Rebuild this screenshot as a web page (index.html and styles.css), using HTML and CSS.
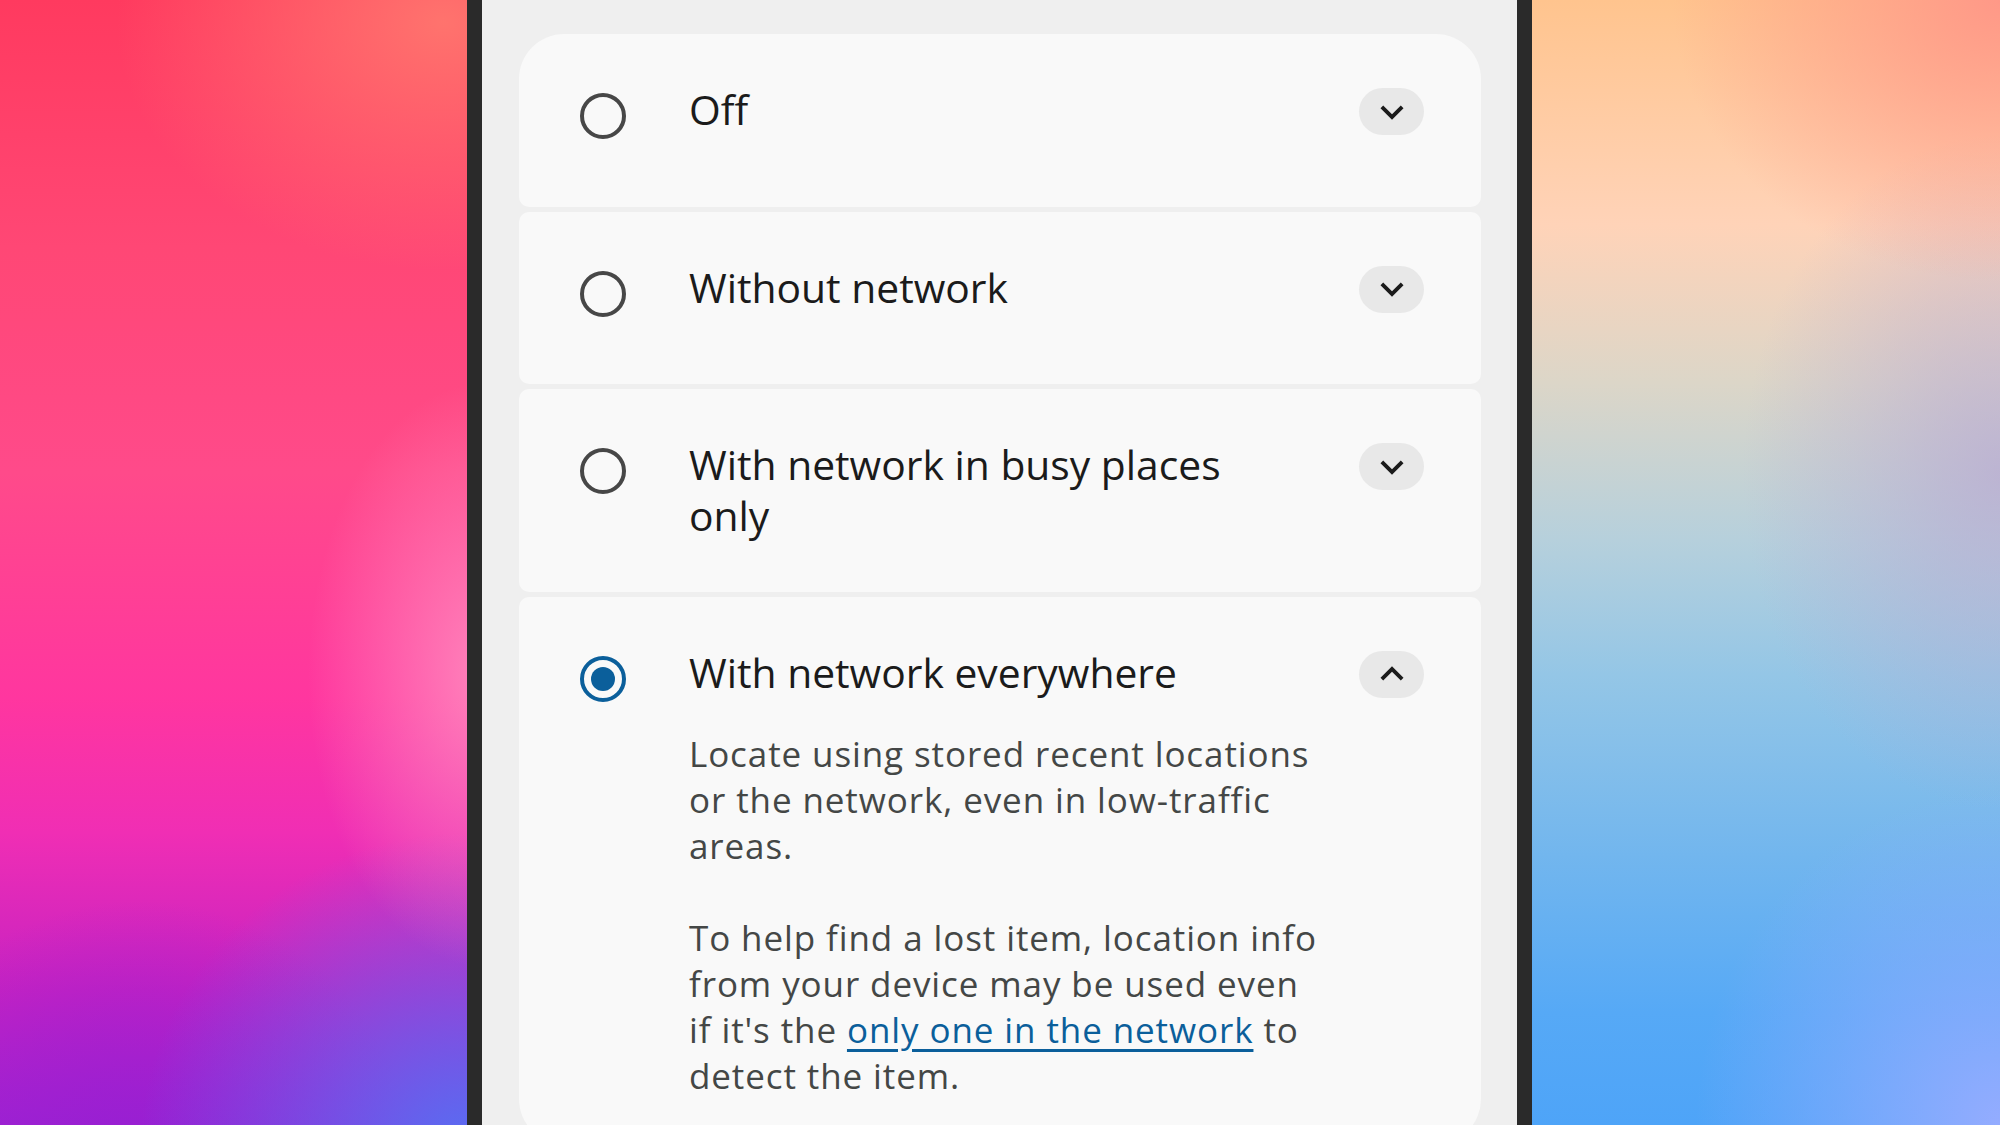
FILE: index.html
```html
<!DOCTYPE html>
<html lang="en">
<head>
<meta charset="utf-8">
<title>Find My Device network</title>
<link rel="stylesheet" href="styles.css">
</head>
<body>
<div class="stage">
  <div class="wall wall-left"></div>
  <div class="phone">
    <div class="screen">
      <div class="options">
        <div class="option first">
          <span class="radio"></span>
          <div class="body">
            <div class="title">Off</div>
          </div>
          <button class="toggle" aria-label="Expand">
            <svg viewBox="0 0 24 24" width="46" height="46"><path d="M16.59 8.59L12 13.17 7.41 8.59 6 10l6 6 6-6z"/></svg>
          </button>
        </div>
        <div class="option">
          <span class="radio"></span>
          <div class="body">
            <div class="title">Without network</div>
          </div>
          <button class="toggle" aria-label="Expand">
            <svg viewBox="0 0 24 24" width="46" height="46"><path d="M16.59 8.59L12 13.17 7.41 8.59 6 10l6 6 6-6z"/></svg>
          </button>
        </div>
        <div class="option">
          <span class="radio"></span>
          <div class="body">
            <div class="title">With network in busy places only</div>
          </div>
          <button class="toggle" aria-label="Expand">
            <svg viewBox="0 0 24 24" width="46" height="46"><path d="M16.59 8.59L12 13.17 7.41 8.59 6 10l6 6 6-6z"/></svg>
          </button>
        </div>
        <div class="option last">
          <span class="radio checked"></span>
          <div class="body">
            <div class="title">With network everywhere</div>
            <p class="desc">Locate using stored recent locations<br>or the network, even in low-traffic<br>areas.</p>
            <p class="desc">To help find a lost item, location info<br>from your device may be used even<br>if it's the <a href="#" class="link">only one in the network</a> to<br>detect the item.</p>
          </div>
          <button class="toggle" aria-label="Collapse">
            <svg viewBox="0 0 24 24" width="46" height="46"><path d="M12 8l-6 6 1.41 1.41L12 10.83l4.59 4.58L18 14z"/></svg>
          </button>
        </div>
      </div>
    </div>
  </div>
  <div class="wall wall-right"></div>
</div>
</body>
</html>
```
FILE: styles.css
```css
html, body {
  margin: 0;
  padding: 0;
  height: 100%;
  overflow: hidden;
}

.stage {
  display: flex;
  width: 2000px;
  height: 1125px;
  font-family: "Open Sans", "Noto Sans", sans-serif;
}

.wall {
  height: 100%;
}

.wall-left {
  width: 467px;
  background:
    radial-gradient(ellipse 70% 22% at 95% 2%, rgba(255, 118, 110, 0.95), rgba(255, 118, 110, 0) 100%),
    radial-gradient(ellipse 38% 26% at 104% 60%, rgba(255, 150, 195, 0.8), rgba(255, 150, 195, 0) 100%),
    radial-gradient(ellipse 70% 28% at 100% 102%, rgba(88, 110, 242, 1), rgba(88, 110, 242, 0) 100%),
    radial-gradient(ellipse 60% 25% at 30% 105%, rgba(150, 30, 210, 0.9), rgba(150, 30, 210, 0) 100%),
    linear-gradient(180deg, #ff3a5f 0%, #ff4775 22%, #ff4a8a 42%, #ff369f 62%, #f02eb4 74%, #c622c2 88%, #a122d2 100%);
}

.wall-right {
  flex: 1;
  background:
    radial-gradient(ellipse 70% 25% at 100% 0%, rgba(255, 150, 135, 0.95), rgba(255, 150, 135, 0) 100%),
    radial-gradient(ellipse 55% 30% at 100% 42%, rgba(185, 170, 210, 0.75), rgba(185, 170, 210, 0) 100%),
    radial-gradient(ellipse 65% 30% at 100% 100%, rgba(148, 172, 255, 1), rgba(148, 172, 255, 0) 100%),
    linear-gradient(180deg, #ffc48e 0%, #ffd3b8 20%, #dcd6c8 34%, #b6d0dc 48%, #94c6e6 60%, #72b6ee 76%, #56a9f6 90%, #4ea4f8 100%);
}

.phone {
  width: 1035px;
  border-left: 15px solid #2a2a2a;
  border-right: 15px solid #2a2a2a;
  background: #efefef;
  height: 100%;
  overflow: hidden;
}

.screen {
  padding: 34px 36px 0 37px;
}

.options {
  display: flex;
  flex-direction: column;
  gap: 5px;
}

.option {
  display: flex;
  align-items: flex-start;
  box-sizing: border-box;
  min-height: 172.5px;
  padding: 50px 57px 50.5px 61px;
  background: #f9f9f9;
  border-radius: 10px;
}

.option.first {
  border-radius: 45px 45px 10px 10px;
}

.option.last {
  border-radius: 10px 10px 45px 45px;
  padding-bottom: 45px;
}

.radio {
  flex: none;
  box-sizing: border-box;
  width: 46px;
  height: 46px;
  margin-top: 9px;
  border: 4px solid #474747;
  border-radius: 50%;
  display: flex;
  align-items: center;
  justify-content: center;
}

.radio.checked {
  border-color: #0b5f9b;
}

.radio.checked::after {
  content: "";
  width: 24px;
  height: 24px;
  border-radius: 50%;
  background: #0b5f9b;
}

.body {
  flex: 1;
  margin-left: 63px;
}

.title {
  font-size: 40.8px;
  line-height: 51px;
  color: #1b1b1b;
  max-width: 560px;
}

.desc {
  margin: 33px 0 0;
  white-space: nowrap;
  font-size: 35px;
  line-height: 46px;
  letter-spacing: 0.9px;
  color: #444746;
}

.desc + .desc {
  margin-top: 46px;
}

.link {
  color: #0b5f9b;
  text-decoration: underline;
  text-decoration-thickness: 3px;
  text-underline-offset: 6px;
}

.toggle {
  flex: none;
  width: 65px;
  height: 47px;
  margin-top: 4px;
  padding: 0;
  border: none;
  border-radius: 24px;
  background: #e8e8e8;
  display: flex;
  align-items: center;
  justify-content: center;
}

.toggle svg {
  fill: #1b1b1b;
  display: block;
}
```
